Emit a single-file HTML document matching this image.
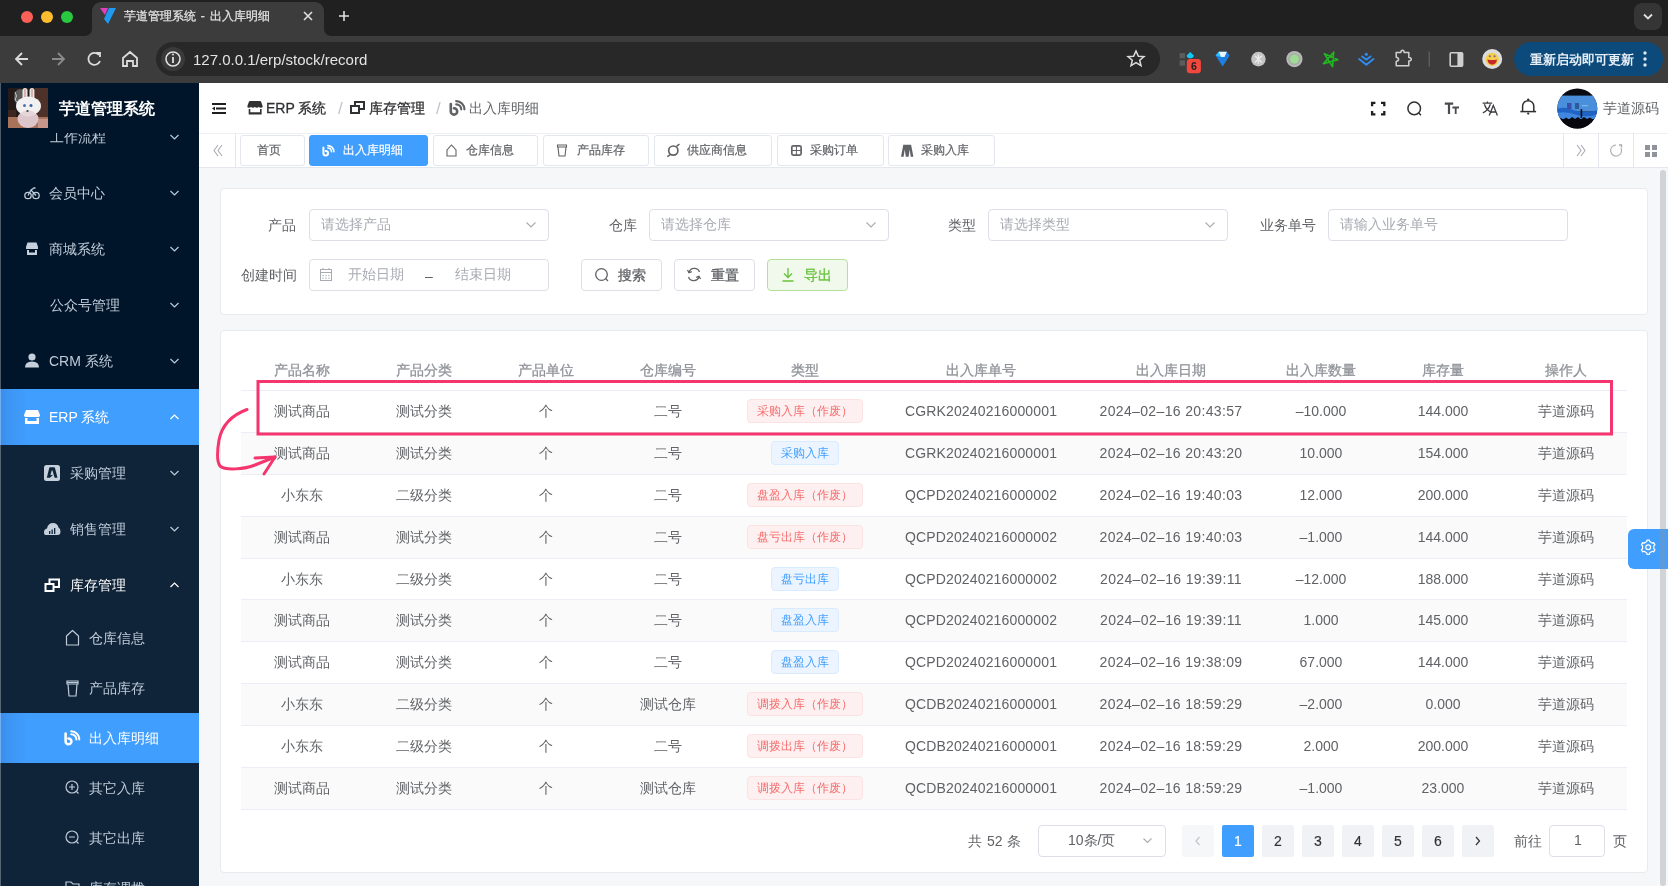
<!DOCTYPE html>
<html><head><meta charset="utf-8">
<style>
*{box-sizing:border-box;margin:0;padding:0}
html,body{width:1668px;height:886px;overflow:hidden;will-change:transform;background:#f5f7f9;font-family:"Liberation Sans",sans-serif;position:relative}
.t{position:absolute;white-space:nowrap;line-height:1}
svg{position:absolute;overflow:visible}
#chrome{position:absolute;left:0;top:0;width:1668px;height:36px;background:#202020}
#toolbar{position:absolute;left:0;top:36px;width:1668px;height:47px;background:#3c3c3c}
#tab{position:absolute;left:92px;top:2px;width:232px;height:40px;background:#3c3c3c;border-radius:9px 9px 0 0}
#url{position:absolute;left:156px;top:42px;width:1004px;height:34px;background:#282828;border-radius:17px}
#side{position:absolute;left:0;top:83px;width:199px;height:803px;background:#001529;overflow:hidden}
.mi{position:absolute;left:0;width:199px;color:#bfcbd9;font-size:14px}
.mi .tx{position:absolute;top:50%;transform:translateY(-50%);line-height:1;white-space:nowrap}
.sub{position:absolute;left:0;width:199px;background:#0f2438}
#header{position:absolute;left:199px;top:83px;width:1469px;height:51px;background:#fff;border-bottom:1px solid #eef0f3}
#tags{position:absolute;left:199px;top:134px;width:1469px;height:34px;background:#fff;border-bottom:1px solid #e4e7ed}
.tg{position:absolute;top:2px;height:31px;border:1px solid #e4e7ed;border-radius:3px;background:#fff;color:#606266;font-size:12px}
.tg .tx{position:absolute;top:8px;line-height:1;white-space:nowrap;-webkit-text-stroke:0.2px currentColor}
.card{position:absolute;background:#fff;border:1px solid #e8eaee;border-radius:4px}
.lbl{position:absolute;font-size:14px;color:#606266;line-height:1;white-space:nowrap;text-align:right}
.inp{position:absolute;height:32px;border:1px solid #dcdfe6;border-radius:4px;background:#fff}
.ph{position:absolute;top:7.3px;font-size:14px;line-height:1;color:#a8abb2;white-space:nowrap}
.btn{position:absolute;top:259px;width:81px;height:32px;border:1px solid #dcdfe6;border-radius:4px;background:#fff;color:#606266;font-size:14px;-webkit-text-stroke:0.3px currentColor}
.btn .tx{position:absolute;left:36px;top:8px;line-height:1}
#tbl{position:absolute;left:241px;top:0;width:1386px}
.thead,.tr{position:absolute;left:241px;width:1386px;height:42px;border-bottom:1px solid #ebeef5}
.tr{background:#fff}
.tr.stripe{background:#fafafa}
.th,.td{position:absolute;top:0;height:41px;text-align:center;line-height:41px;font-size:14px;white-space:nowrap}
.th{color:#909399;-webkit-text-stroke:0.3px #909399;top:1px}
.td{color:#606266}
.tag{display:inline-block;height:24px;line-height:22px;padding:0 9px;font-size:12px;border-radius:4px;border:1px solid;vertical-align:middle;position:relative;top:-1px}
.tag.r{background:#fef0f0;border-color:#fde2e2;color:#f56c6c}
.tag.b{background:#ecf5ff;border-color:#d9ecff;color:#409eff}
.pg{position:absolute;top:825px;width:32px;height:32px;background:#f0f2f5;border-radius:2px;color:#303133;font-size:14px;text-align:center;line-height:32px;-webkit-text-stroke:0.15px currentColor}
</style></head>
<body>
<!-- ===== browser chrome ===== -->
<div id="chrome"></div>
<div id="toolbar"></div>
<div id="tab"></div>
<svg style="left:0;top:0" width="400" height="40">
  <circle cx="27" cy="17" r="6" fill="#fe5f57"/>
  <circle cx="47" cy="17" r="6" fill="#febc2e"/>
  <circle cx="67" cy="17" r="6" fill="#28c840"/>
  <path d="M84 36 Q92 36 92 28 L92 36 Z" fill="#3c3c3c"/>
  <path d="M332 36 Q324 36 324 28 L324 36 Z" fill="#3c3c3c"/>
  <path d="M100 8 L108 8 L105 15 Z" fill="#e23fbf"/>
  <path d="M109 8 L116 8 L108 24 L104 19 Z" fill="#1e9bf0"/>
  <path d="M304 12 L312 20 M312 12 L304 20" stroke="#e0e0e0" stroke-width="1.6"/>
  <path d="M344 11 L344 21 M339 16 L349 16" stroke="#e0e0e0" stroke-width="1.6"/>
</svg>
<div class="t" style="left:124px;top:10px;font-size:12px;color:#e3e3e3;-webkit-text-stroke:0.25px #e3e3e3;word-spacing:1.5px">芋道管理系统 - 出入库明细</div>
<svg style="left:1634px;top:3px" width="28" height="28">
  <rect x="0" y="0" width="28" height="27" rx="8" fill="#353535"/>
  <path d="M10 11.5 L14 15.5 L18 11.5" stroke="#e0e0e0" stroke-width="1.8" fill="none"/>
</svg>
<div id="url"></div>
<svg style="left:0;top:36px" width="1668" height="47">
  <!-- back fwd reload home -->
  <path d="M16 23 L28 23 M22 17 L16 23 L22 29" stroke="#dcdcdc" stroke-width="1.8" fill="none"/>
  <path d="M64 23 L52 23 M58 17 L64 23 L58 29" stroke="#8a8a8a" stroke-width="1.8" fill="none"/>
  <path d="M99 19 A6 6 0 1 0 100 25" stroke="#dcdcdc" stroke-width="1.8" fill="none"/>
  <path d="M96 17 L100 17 L100 21" stroke="#dcdcdc" stroke-width="1.8" fill="none"/>
  <path d="M123 22 L130 16 L137 22 L137 30 L133 30 L133 25 L127 25 L127 30 L123 30 Z" stroke="#dcdcdc" stroke-width="1.8" fill="none"/>
  <circle cx="173" cy="23" r="12" fill="#3a3a3a"/>
  <circle cx="173" cy="23" r="7" stroke="#e0e0e0" stroke-width="1.6" fill="none"/>
  <path d="M173 21 L173 27" stroke="#e0e0e0" stroke-width="1.8"/>
  <circle cx="173" cy="18.6" r="1" fill="#e0e0e0"/>
  <!-- star -->
  <path d="M1136 15 L1138.4 20.2 L1144 20.6 L1139.7 24.2 L1141 29.6 L1136 26.7 L1131 29.6 L1132.3 24.2 L1128 20.6 L1133.6 20.2 Z" stroke="#dcdcdc" stroke-width="1.5" fill="none"/>
  <!-- ext icons -->
  <rect x="1179.6" y="17.1" width="5.4" height="5.2" fill="#5c5c5c"/><rect x="1179.6" y="24.3" width="5.4" height="5.4" fill="#5c5c5c"/>
  <path d="M1190.2 15.9 L1193.8 19.6 Q1194 21.8 1191.5 22.2 L1189 22.2 Q1186.4 21.8 1186.6 19.6 Z" fill="#14c8f5"/>
  <rect x="1186.8" y="23.1" width="14.1" height="14.1" rx="3" fill="#f2473c"/>
  <text x="1193.9" y="34.4" font-size="10.5" fill="#222" text-anchor="middle" font-family="Liberation Sans" font-weight="bold">6</text>
  <path d="M1215.6 19.4 L1218.5 15.7 L1226.8 15.7 L1229.7 19.4 L1223 30 L1222.3 30 Z" fill="#1f7fe0"/>
  <path d="M1218.5 15.7 L1226.8 15.7 L1224.5 21 L1220.8 21 Z" fill="#e9f6ff"/>
  <path d="M1215.6 19.4 L1218.5 15.7 L1220.8 21 Z" fill="#2cc0ff"/>
  <circle cx="1258.4" cy="23.1" r="7.3" fill="#c4c4c4"/>
  <path d="M1255 19.7 L1261.8 26.5 M1261.8 19.7 L1255 26.5 M1258.4 18.5 L1258.4 27.7" stroke="#eaeaea" stroke-width="1.4"/>
  <circle cx="1294.4" cy="23.1" r="8.1" fill="#b9b9b9"/><circle cx="1294.4" cy="23.1" r="6.2" fill="#a9a9a9"/><circle cx="1294.4" cy="23.1" r="4.6" fill="#9edb93"/>
  <path d="M1333.7 16.2 L1332.5 30.6 L1324.4 17.7 L1337.9 23.7 L1323.5 27.6 Z" stroke="#22b522" stroke-width="1.7" fill="none" stroke-linejoin="round"/>
  <circle cx="1366.3" cy="18.3" r="1.6" fill="#2f8cf0"/>
  <path d="M1362.1 20.4 L1366.3 23.5 L1370.5 20.4 M1359.1 23.1 L1366.3 28.8 L1373.5 23.1" stroke="#2f8cf0" stroke-width="1.9" fill="none" stroke-linecap="round"/>
  <path d="M1396.2 16.5 L1400.8 16.5 Q1401 14.3 1402.5 14.3 Q1404 14.3 1404.2 16.5 L1408.8 16.5 L1408.8 21.6 Q1411.3 21.8 1411.3 23.3 Q1411.3 24.8 1408.8 25 L1408.8 29.8 L1396.2 29.8 L1396.2 25.4 Q1398.6 25 1398.6 23.3 Q1398.6 21.6 1396.2 21.2 Z" stroke="#d0d0d0" stroke-width="1.5" fill="none" stroke-linejoin="round"/>
  <path d="M1429.2 15.4 L1429.2 30.8" stroke="#636363" stroke-width="1.2"/>
  <rect x="1450.2" y="16.8" width="12.4" height="13.4" rx="1" stroke="#cfcfcf" stroke-width="1.6" fill="none"/>
  <rect x="1457.4" y="16.8" width="5.2" height="13.4" fill="#cfcfcf"/>
  <circle cx="1492.2" cy="23" r="10" fill="#dcdcdc"/>
  <circle cx="1492.2" cy="23.3" r="6.6" fill="#f3cf4a"/>
  <path d="M1487.4 23.6 Q1492.2 24.6 1497 23.6 Q1496.4 28.6 1492.2 28.8 Q1488 28.6 1487.4 23.6 Z" fill="#c8282a"/>
  <circle cx="1489.8" cy="20.3" r="1" fill="#7a5aa0"/><circle cx="1494.6" cy="20.3" r="1" fill="#7a5aa0"/>
  <rect x="1514" y="6" width="149" height="34" rx="17" fill="#0b4a7b"/>
  <circle cx="1645" cy="17" r="1.7" fill="#dfe9f5"/><circle cx="1645" cy="23" r="1.7" fill="#dfe9f5"/><circle cx="1645" cy="29" r="1.7" fill="#dfe9f5"/>
</svg>
<div class="t" style="left:193px;top:52px;font-size:15px;color:#e3e3e3">127.0.0.1/erp/stock/record</div>
<div class="t" style="left:1530px;top:53px;font-size:13px;color:#e6eef8;font-weight:bold">重新启动即可更新</div>

<!-- ===== sidebar ===== -->
<div id="side">
  <div class="sub" style="top:306px;height:497px"></div>
  <div class="mi" style="top:306px;height:56px;background:linear-gradient(90deg,#3a8ce8 0,#3d95f2 8px,#409eff 28px);color:#fff"></div>
  <div class="mi" style="top:630px;height:50px;background:linear-gradient(90deg,#3a8ce8 0,#3d95f2 8px,#409eff 28px);color:#fff"></div>
  <div style="position:absolute;left:0;top:0;width:1px;height:803px;background:rgba(255,255,255,0.3)"></div>
</div>
<div id="menu-texts">
  <svg style="left:8px;top:88px;overflow:hidden" width="40" height="40">
  <rect width="40" height="40" fill="#241a18"/>
  <rect x="27" y="0" width="13" height="29" fill="#4e3128"/>
  <rect x="0" y="22" width="8" height="8" fill="#3b2620"/>
  <rect x="0" y="29" width="40" height="11" fill="#a8735a"/>
  <rect x="30" y="31" width="10" height="9" fill="#c7968a"/>
  <ellipse cx="12" cy="9" rx="6" ry="8" fill="#5a5a5a"/>
  <path d="M7 4 Q10 8 7 12 Q11 14 9 19" stroke="#c8c8c8" stroke-width="1" fill="none"/>
  <rect x="14.5" y="0" width="5" height="13" rx="2.5" fill="#ece6e6"/>
  <rect x="21.5" y="0" width="5" height="13" rx="2.5" fill="#ece6e6"/>
  <path d="M17 1 L17 11 M24 1 L24 11" stroke="#d9a59c" stroke-width="1.6"/>
  <ellipse cx="20" cy="31" rx="10.5" ry="9" fill="#dcc6cc"/>
  <ellipse cx="20.5" cy="18" rx="12.5" ry="9.5" fill="#f2f0f0"/>
  <ellipse cx="20" cy="25.5" rx="7" ry="3" fill="#e6d6da"/>
  <circle cx="16.5" cy="17.5" r="1.5" fill="#4a76b0"/>
  <circle cx="23" cy="17.5" r="1.5" fill="#35609a"/>
  <ellipse cx="19.5" cy="23" rx="1.2" ry="1" fill="#444"/>
</svg>
  <div class="t" style="left:59px;top:101px;font-size:16px;color:#fff;font-weight:bold">芋道管理系统</div>
  <div style="position:absolute;left:0;top:133px;width:199px;height:753px;overflow:hidden">
    <div class="t" style="left:50px;top:-3px;font-size:14px;color:#bfcbd9">工作流程</div>
    <div class="t" style="left:49px;top:53px;font-size:14px;color:#bfcbd9">会员中心</div>
    <div class="t" style="left:49px;top:109px;font-size:14px;color:#bfcbd9">商城系统</div>
    <div class="t" style="left:50px;top:165px;font-size:14px;color:#bfcbd9">公众号管理</div>
    <div class="t" style="left:49px;top:221px;font-size:14px;color:#bfcbd9">CRM 系统</div>
    <div class="t" style="left:49px;top:277px;font-size:14px;color:#fff">ERP 系统</div>
    <div class="t" style="left:70px;top:333px;font-size:14px;color:#bfcbd9">采购管理</div>
    <div class="t" style="left:70px;top:389px;font-size:14px;color:#bfcbd9">销售管理</div>
    <div class="t" style="left:70px;top:445px;font-size:14px;color:#fff">库存管理</div>
    <div class="t" style="left:89px;top:498px;font-size:14px;color:#bfcbd9">仓库信息</div>
    <div class="t" style="left:89px;top:548px;font-size:14px;color:#bfcbd9">产品库存</div>
    <div class="t" style="left:89px;top:598px;font-size:14px;color:#fff">出入库明细</div>
    <div class="t" style="left:89px;top:648px;font-size:14px;color:#bfcbd9">其它入库</div>
    <div class="t" style="left:89px;top:698px;font-size:14px;color:#bfcbd9">其它出库</div>
    <div class="t" style="left:89px;top:748px;font-size:14px;color:#bfcbd9">库存调拨</div>
  </div>
  <svg style="left:0;top:0" width="199" height="886">
    <g stroke="#bfcbd9" stroke-width="1.2" fill="none">
      <path d="M170.5 135 L174.5 139 L178.5 135"/>
      <path d="M170.5 191 L174.5 195 L178.5 191"/>
      <path d="M170.5 247 L174.5 251 L178.5 247"/>
      <path d="M170.5 303 L174.5 307 L178.5 303"/>
      <path d="M170.5 359 L174.5 363 L178.5 359"/>
      <path d="M170.5 471 L174.5 475 L178.5 471"/>
      <path d="M170.5 527 L174.5 531 L178.5 527"/>
    </g>
    <g stroke="#fff" stroke-width="1.2" fill="none">
      <path d="M170.5 419 L174.5 415 L178.5 419"/>
      <path d="M170.5 587 L174.5 583 L178.5 587"/>
    </g>
    <!-- bicycle -->
    <g stroke="#bfcbd9" stroke-width="1.3" fill="none">
      <circle cx="28" cy="195.5" r="3.2"/><circle cx="36" cy="195.5" r="3.2"/>
      <path d="M28 195.5 L31 190 L36 195.5 M31 190 L34 188 L35.5 188"/>
    </g>
    <!-- shop -->
    <g fill="#c5d0dc"><path d="M26 247 L27.5 242.5 L36.5 242.5 L38 247 L38 249 L26 249 Z"/><path d="M27 250 L29 250 L29 252.5 L35 252.5 L35 250 L37 250 L37 255 L27 255 Z"/></g>
    <!-- user -->
    <g fill="#c5d0dc"><circle cx="32" cy="357" r="3.6"/><path d="M25 367.5 Q25 361.5 32 361.5 Q39 361.5 39 367.5 Z"/></g>
    <!-- erp shop (white) -->
    <g fill="#fff"><path d="M24 415 L26 410 L38 410 L40 415 Q40 417 38.5 417 L25.5 417 Q24 417 24 415 Z"/><path d="M25 418 L27.5 418 L27.5 421 L36.5 421 L36.5 418 L39 418 L39 424 L25 424 Z"/></g>
    <!-- A icon -->
    <rect x="44" y="465" width="16" height="16" rx="2.5" fill="#c5d0dc"/>
    <path d="M46.8 477.8 L49.3 467.8 Q49.5 467.3 50 467.3 L54.2 467.3 Q54.7 467.3 54.9 467.8 L57.5 477.8 L54.6 477.8 L52.5 470.6 L51.7 470.6 L50.4 475.2 L53.2 474.8 L50 477.8 Z" fill="#0f2438"/>
    <!-- cloud -->
    <path d="M45.5 535 Q44 535 44 532 Q44 529 47 528.5 Q48 523 53 523 Q57.5 523 58.5 527.5 Q60.5 528.5 60.5 531.5 Q60.5 535 57.5 535 Z" fill="#c5d0dc"/>
    <g fill="#0f2438"><rect x="49" y="531" width="1.3" height="3"/><rect x="51.5" y="529.5" width="1.3" height="4.5"/><rect x="54" y="528" width="1.3" height="6"/></g>
    <!-- stock (white) -->
    <g stroke="#fff" stroke-width="2" fill="none"><rect x="45.5" y="584" width="8" height="7"/><path d="M49.5 584 L49.5 579.5 L59 579.5 L59 587 L53.5 587"/></g>
    <!-- house -->
    <path d="M66.5 645 L66.5 636 L72.5 630.5 L78.5 636 L78.5 645 Z" stroke="#bfcbd9" stroke-width="1.2" fill="none" stroke-linejoin="round"/>
    <!-- cup -->
    <g stroke="#bfcbd9" stroke-width="1.2" fill="none"><path d="M67 681 L78 681 L78 684 L67 684 Z M68 684 L69 696 L76 696 L77 684 M67.5 682.5 L77.5 682.5"/></g>
    <!-- record white -->
    <g stroke="#fff" fill="none" stroke-linecap="round"><path d="M65.6 733.6 L65.6 741.4 A2.9 2.9 0 1 0 68.5 738.5" stroke-width="2.6"/><path d="M71.2 734.2 A5.2 5.2 0 0 1 76.4 739.4" stroke-width="2"/><path d="M71.2 731.3 A8.1 8.1 0 0 1 79.3 739.4" stroke-width="2"/></g>
    <!-- zoom in / out -->
    <g stroke="#bfcbd9" stroke-width="1.2" fill="none">
      <circle cx="72" cy="787" r="6"/><path d="M76.5 791.5 L78.5 793.5 M69 787 L75 787 M72 784 L72 790"/>
      <circle cx="72" cy="837" r="6"/><path d="M76.5 841.5 L78.5 843.5 M69 837 L75 837"/>
      <path d="M66 888 L66 882 L71 882 L73 884 L79 884 L79 888"/>
    </g>
  </svg>
</div>

<!-- ===== header ===== -->
<div id="header"></div>
<svg style="left:199px;top:83px" width="1469" height="50">
  <!-- hamburger -->
  <g fill="#1f1f1f"><rect x="13" y="20" width="14" height="2"/><rect x="17" y="24.5" width="10" height="2"/><rect x="13" y="29" width="14" height="2"/><path d="M13 25.5 L16 23.5 L16 27.5 Z"/></g>
  <!-- erp shop icon -->
  <g fill="#303133"><path d="M48.3 23.2 L50 18.6 Q50.3 18 51 18 L61 18 Q61.7 18 62 18.6 L63.7 23.2 Q63.7 24.8 62 24.8 Q60.3 24.8 59.8 23.8 Q59.3 24.8 57.8 24.8 Q56.3 24.8 55.9 23.8 Q55.5 24.8 54 24.8 Q52.5 24.8 52.1 23.8 Q51.6 24.8 50 24.8 Q48.3 24.8 48.3 23.2 Z"/><path d="M49.7 26 L51.3 26 L51.3 29.3 L61 29.3 L61 26 L62.6 26 L62.6 31.5 L49.7 31.5 Z"/></g>
  <!-- stock icon -->
  <g stroke="#303133" stroke-width="2" fill="none"><rect x="152" y="23" width="8" height="7"/><path d="M156 23 L156 19 L165 19 L165 26 L160 26"/></g>
  <!-- record icon -->
  <g stroke="#606266" fill="none" stroke-linecap="round"><path d="M251.8 21 L251.8 28.4 A3.2 3.2 0 1 0 255 25.2" stroke-width="2.6"/><path d="M257.2 21.3 A5 5 0 0 1 262.2 26.3" stroke-width="2.2"/><path d="M257.2 18.1 A8.2 8.2 0 0 1 265.4 26.3" stroke-width="2.2"/></g>
  <text x="139" y="31" font-size="17" fill="#c0c4cc" font-family="Liberation Sans">/</text>
  <text x="237" y="31" font-size="17" fill="#c0c4cc" font-family="Liberation Sans">/</text>
  <!-- right icons -->
  <g stroke="#1f1f1f" stroke-width="2.3" fill="none">
    <path d="M1173.1 23.2 L1173.1 19.9 L1176.4 19.9 M1182 19.9 L1185.3 19.9 L1185.3 23.2 M1185.3 28 L1185.3 31.3 L1182 31.3 M1176.4 31.3 L1173.1 31.3 L1173.1 28"/>
  </g>
  <g stroke="#303133" stroke-width="1.5" fill="none">
    <circle cx="1215.2" cy="25.4" r="6.3"/><path d="M1219.8 30 L1222 32.2"/>
  </g>
  <g fill="#4a4b4f">
    <path d="M1245.8 19.6 L1254.2 19.6 L1254.2 21.7 L1251.1 21.7 L1251.1 31 L1248.9 31 L1248.9 21.7 L1245.8 21.7 Z"/>
    <path d="M1253.4 23.6 L1260 23.6 L1260 25.4 L1257.6 25.4 L1257.6 31 L1255.8 31 L1255.8 25.4 L1253.4 25.4 Z"/>
  </g>
  <g stroke="#3c3d41" stroke-width="1.3" fill="none">
    <path d="M1283.6 20.2 L1293.2 20.2 M1288.4 18.6 L1288.4 20.2 M1285.4 21.2 Q1287.5 27.5 1292.8 29.5 M1291.4 21.2 Q1289.2 27.5 1283.8 29.8"/>
    <path d="M1290.2 32.5 L1294.3 22.5 L1298.4 32.5 M1291.7 29 L1296.9 29"/>
  </g>
  <g stroke="#303133" stroke-width="1.5" fill="none">
    <path d="M1323.6 28.3 L1323.6 23.3 A5.6 5.6 0 0 1 1334.8 23.3 L1334.8 28.3"/><path d="M1321.3 28.6 L1337.1 28.6"/>
  </g>
  <circle cx="1329.2" cy="16.6" r="1.2" fill="#303133"/>
  <circle cx="1329.2" cy="30.6" r="1.1" fill="#303133"/>
  <!-- avatar -->
  <clipPath id="av"><circle cx="1378.3" cy="25.4" r="20"/></clipPath>
  <g clip-path="url(#av)">
    <rect x="1358" y="5" width="41" height="41" fill="#0a0a12"/>
    <rect x="1358" y="12.6" width="41" height="16" fill="#4a8fdc"/>
    <path d="M1358 26 Q1366 23 1374 27 Q1386 31 1399 27 L1399 36 L1358 36 Z" fill="#1f63c4"/>
    <path d="M1358 30 Q1368 28 1378 32 Q1390 35 1399 31 L1399 36 L1358 36 Z" fill="#3f86e0"/>
    <rect x="1368" y="20" width="4.5" height="6" fill="#3a4fa8"/>
    <rect x="1376" y="20" width="4" height="6" fill="#2d5a9a"/>
    <rect x="1383" y="22" width="6" height="1.3" fill="#7fb2ea"/>
    <rect x="1381.6" y="26" width="1.6" height="9" fill="#111"/>
    <path d="M1358 46 L1358 36 L1362 35 L1364 37 L1367 34.5 L1370 36.5 L1373 34 L1376 36 L1379 34 L1382 36.5 L1385 34 L1388 36 L1391 34.5 L1394 36.5 L1399 35 L1399 46 Z" fill="#07070d"/>
  </g>
</svg>
<div class="t" style="left:266px;top:101px;font-size:14px;color:#303133;-webkit-text-stroke:0.3px #303133">ERP 系统</div>
<div class="t" style="left:369px;top:101px;font-size:14px;color:#303133;-webkit-text-stroke:0.3px #303133">库存管理</div>
<div class="t" style="left:469px;top:101px;font-size:14px;color:#606266">出入库明细</div>
<div class="t" style="left:1603px;top:101px;font-size:14px;color:#606266">芋道源码</div>
<div id="tags"></div>
<div style="position:absolute;left:235px;top:133px;width:1px;height:34px;background:#e4e7ed"></div>
<div style="position:absolute;left:1563px;top:133px;width:1px;height:34px;background:#e4e7ed"></div>
<div style="position:absolute;left:1598px;top:133px;width:1px;height:34px;background:#e4e7ed"></div>
<div style="position:absolute;left:1633px;top:133px;width:1px;height:34px;background:#e4e7ed"></div>
<div style="position:absolute;left:199px;top:133px">
<div class="tg" style="left:41px;width:65px"><div class="tx" style="left:16px">首页</div></div>
<div class="tg" style="left:110px;width:119px;background:#409eff;border-color:#409eff;color:#fff"><div class="tx" style="left:33px">出入库明细</div></div>
<div class="tg" style="left:234px;width:105px"><div class="tx" style="left:32px">仓库信息</div></div>
<div class="tg" style="left:344px;width:106px"><div class="tx" style="left:33px">产品库存</div></div>
<div class="tg" style="left:455px;width:118px"><div class="tx" style="left:32px">供应商信息</div></div>
<div class="tg" style="left:578px;width:107px"><div class="tx" style="left:32px">采购订单</div></div>
<div class="tg" style="left:689px;width:107px"><div class="tx" style="left:32px">采购入库</div></div>
</div>
<svg style="left:0;top:133px" width="1668" height="35">
  <g stroke="#a8abb2" stroke-width="1.1" fill="none">
    <path d="M218 12 L214 17.5 L218 23 M222 12 L218 17.5 L222 23"/>
    <path d="M1577 12 L1581 17.5 L1577 23 M1581 12 L1585 17.5 L1581 23"/>
    <path d="M1621 15 A5.5 5.5 0 1 1 1616 12"/><path d="M1619 12 L1621.5 12 L1621.5 14.5" stroke-width="1.4"/>
  </g>
  <g fill="#909399"><rect x="1645" y="12" width="5" height="5"/><rect x="1652" y="12" width="5" height="5"/><rect x="1645" y="19" width="5" height="5"/><rect x="1652" y="19" width="5" height="5"/></g>
  <!-- active tag icon -->
  <g stroke="#fff" fill="none" stroke-linecap="round"><path d="M323.4 14.6 L323.4 20.3 A2.3 2.3 0 1 0 325.7 18" stroke-width="2"/><path d="M327.8 15 A3.7 3.7 0 0 1 331.5 18.7" stroke-width="1.6"/><path d="M327.8 12.6 A6.1 6.1 0 0 1 333.9 18.7" stroke-width="1.6"/></g>
  <g stroke="#606266" stroke-width="1.1" fill="none">
    <path d="M447 23 L447 17 L451.5 12 L456 17 L456 23 Z"/>
    <path d="M558 14 L566 14 L565 23 L559 23 Z M557.5 12 L566.5 12 L566.5 14 L557.5 14 Z"/>
    
    
  </g>
  <g fill="#606266"><path d="M901 23.7 L903.3 11.8 L911.1 11.8 L913.4 23.7 L910.8 23.7 L909.6 16.5 L908.6 23.7 L905.8 23.7 L904.8 16.5 L903.6 23.7 Z"/></g>
  <g stroke="#606266" fill="none">
    <circle cx="673.3" cy="17.6" r="4.6" stroke-width="1.7"/>
    <path d="M676.5 13.6 Q678 12 679.5 11.2" stroke-width="1.5"/>
    <path d="M670 21.6 Q668.5 23 667.3 23.7" stroke-width="1.5"/>
    <rect x="791.8" y="12.8" width="9.3" height="9.3" rx="1.5" stroke-width="1.7"/>
    <path d="M796.4 12.8 L796.4 22.1 M791.8 17.5 L801.1 17.5" stroke-width="1"/>
  </g>
</svg>

<!-- ===== search card ===== -->
<div class="card" style="left:220px;top:188px;width:1428px;height:127px"></div>
<div class="lbl" style="left:268px;top:218px">产品</div>
<div class="inp" style="left:309px;top:209px;width:240px"><div class="ph" style="left:11px">请选择产品</div></div>
<div class="lbl" style="left:609px;top:218px">仓库</div>
<div class="inp" style="left:649px;top:209px;width:240px"><div class="ph" style="left:11px">请选择仓库</div></div>
<div class="lbl" style="left:948px;top:218px">类型</div>
<div class="inp" style="left:988px;top:209px;width:240px"><div class="ph" style="left:11px">请选择类型</div></div>
<div class="lbl" style="left:1260px;top:218px">业务单号</div>
<div class="inp" style="left:1328px;top:209px;width:240px"><div class="ph" style="left:11px">请输入业务单号</div></div>
<div class="lbl" style="left:241px;top:268px">创建时间</div>
<div class="inp" style="left:309px;top:259px;width:240px">
  <div class="ph" style="left:38px">开始日期</div>
  <div class="ph" style="left:115px;top:8.5px;color:#606266">–</div>
  <div class="ph" style="left:145px">结束日期</div>
</div>
<div class="btn" style="left:581px"><div class="tx">搜索</div></div>
<div class="btn" style="left:674px"><div class="tx">重置</div></div>
<div class="btn" style="left:767px;background:#f0f9eb;border-color:#b3e19d;color:#67c23a"><div class="tx">导出</div></div>
<svg style="left:0;top:0" width="1668" height="330">
  <g stroke="#a8abb2" stroke-width="1.1" fill="none">
    <path d="M526.5 222.5 L531 227 L535.5 222.5"/>
    <path d="M866.5 222.5 L871 227 L875.5 222.5"/>
    <path d="M1205.5 222.5 L1210 227 L1214.5 222.5"/>
  </g>
  <g stroke="#a8abb2" stroke-width="1" fill="none">
    <rect x="320.5" y="269.5" width="11" height="11"/><path d="M320.5 272.5 L331.5 272.5 M323 268 L323 270 M329 268 L329 270"/>
  </g>
  <g fill="#a8abb2"><rect x="322.5" y="275" width="1.2" height="1.2"/><rect x="325.4" y="275" width="1.2" height="1.2"/><rect x="328.3" y="275" width="1.2" height="1.2"/><rect x="322.5" y="277.6" width="1.2" height="1.2"/><rect x="325.4" y="277.6" width="1.2" height="1.2"/><rect x="328.3" y="277.6" width="1.2" height="1.2"/></g>
  <g stroke="#606266" stroke-width="1.3" fill="none">
    <circle cx="601.5" cy="274.5" r="5.8"/><path d="M605.8 278.8 L608 281"/>
    <path d="M699.5 272 A5.5 5.5 0 0 0 689 272.5 M688.5 277 A5.5 5.5 0 0 0 699 276.5"/>
    <path d="M687.5 270 L689 272.7 L691.8 271.6 M700.5 279 L699 276.3 L696.2 277.4"/>
  </g>
  <g stroke="#67c23a" stroke-width="1.3" fill="none">
    <path d="M788 268 L788 277.5 M784 273.5 L788 277.5 L792 273.5 M782.5 281 L793.5 281"/>
  </g>
</svg>

<!-- ===== table card ===== -->
<div class="card" style="left:220px;top:330px;width:1428px;height:543px"></div>
<div class="thead" style="top:349px">
<div class="th" style="left:0px;width:122px">产品名称</div>
<div class="th" style="left:122px;width:122px">产品分类</div>
<div class="th" style="left:244px;width:122px">产品单位</div>
<div class="th" style="left:366px;width:122px">仓库编号</div>
<div class="th" style="left:488px;width:152px">类型</div>
<div class="th" style="left:640px;width:200px">出入库单号</div>
<div class="th" style="left:840px;width:180px">出入库日期</div>
<div class="th" style="left:1020px;width:120px">出入库数量</div>
<div class="th" style="left:1140px;width:124px">库存量</div>
<div class="th" style="left:1264px;width:122px">操作人</div>
</div>
<div class="tr" style="top:391px;height:42px">
<div class="td" style="left:0px;width:122px;">测试商品</div>
<div class="td" style="left:122px;width:122px;">测试分类</div>
<div class="td" style="left:244px;width:122px;">个</div>
<div class="td" style="left:366px;width:122px;">二号</div>
<div class="td" style="left:488px;width:152px;"><span class="tag r">采购入库（作废）</span></div>
<div class="td" style="left:640px;width:200px;letter-spacing:0.15px;">CGRK20240216000001</div>
<div class="td" style="left:840px;width:180px;letter-spacing:0.35px;">2024&#8211;02&#8211;16 20:43:57</div>
<div class="td" style="left:1020px;width:120px;">&#8211;10.000</div>
<div class="td" style="left:1140px;width:124px;">144.000</div>
<div class="td" style="left:1264px;width:122px;">芋道源码</div>
</div>
<div class="tr stripe" style="top:433px;height:42px">
<div class="td" style="left:0px;width:122px;">测试商品</div>
<div class="td" style="left:122px;width:122px;">测试分类</div>
<div class="td" style="left:244px;width:122px;">个</div>
<div class="td" style="left:366px;width:122px;">二号</div>
<div class="td" style="left:488px;width:152px;"><span class="tag b">采购入库</span></div>
<div class="td" style="left:640px;width:200px;letter-spacing:0.15px;">CGRK20240216000001</div>
<div class="td" style="left:840px;width:180px;letter-spacing:0.35px;">2024&#8211;02&#8211;16 20:43:20</div>
<div class="td" style="left:1020px;width:120px;">10.000</div>
<div class="td" style="left:1140px;width:124px;">154.000</div>
<div class="td" style="left:1264px;width:122px;">芋道源码</div>
</div>
<div class="tr" style="top:475px;height:42px">
<div class="td" style="left:0px;width:122px;">小东东</div>
<div class="td" style="left:122px;width:122px;">二级分类</div>
<div class="td" style="left:244px;width:122px;">个</div>
<div class="td" style="left:366px;width:122px;">二号</div>
<div class="td" style="left:488px;width:152px;"><span class="tag r">盘盈入库（作废）</span></div>
<div class="td" style="left:640px;width:200px;letter-spacing:0.15px;">QCPD20240216000002</div>
<div class="td" style="left:840px;width:180px;letter-spacing:0.35px;">2024&#8211;02&#8211;16 19:40:03</div>
<div class="td" style="left:1020px;width:120px;">12.000</div>
<div class="td" style="left:1140px;width:124px;">200.000</div>
<div class="td" style="left:1264px;width:122px;">芋道源码</div>
</div>
<div class="tr stripe" style="top:517px;height:42px">
<div class="td" style="left:0px;width:122px;">测试商品</div>
<div class="td" style="left:122px;width:122px;">测试分类</div>
<div class="td" style="left:244px;width:122px;">个</div>
<div class="td" style="left:366px;width:122px;">二号</div>
<div class="td" style="left:488px;width:152px;"><span class="tag r">盘亏出库（作废）</span></div>
<div class="td" style="left:640px;width:200px;letter-spacing:0.15px;">QCPD20240216000002</div>
<div class="td" style="left:840px;width:180px;letter-spacing:0.35px;">2024&#8211;02&#8211;16 19:40:03</div>
<div class="td" style="left:1020px;width:120px;">&#8211;1.000</div>
<div class="td" style="left:1140px;width:124px;">144.000</div>
<div class="td" style="left:1264px;width:122px;">芋道源码</div>
</div>
<div class="tr" style="top:559px;height:41px">
<div class="td" style="left:0px;width:122px;">小东东</div>
<div class="td" style="left:122px;width:122px;">二级分类</div>
<div class="td" style="left:244px;width:122px;">个</div>
<div class="td" style="left:366px;width:122px;">二号</div>
<div class="td" style="left:488px;width:152px;"><span class="tag b">盘亏出库</span></div>
<div class="td" style="left:640px;width:200px;letter-spacing:0.15px;">QCPD20240216000002</div>
<div class="td" style="left:840px;width:180px;letter-spacing:0.35px;">2024&#8211;02&#8211;16 19:39:11</div>
<div class="td" style="left:1020px;width:120px;">&#8211;12.000</div>
<div class="td" style="left:1140px;width:124px;">188.000</div>
<div class="td" style="left:1264px;width:122px;">芋道源码</div>
</div>
<div class="tr stripe" style="top:600px;height:42px">
<div class="td" style="left:0px;width:122px;">测试商品</div>
<div class="td" style="left:122px;width:122px;">测试分类</div>
<div class="td" style="left:244px;width:122px;">个</div>
<div class="td" style="left:366px;width:122px;">二号</div>
<div class="td" style="left:488px;width:152px;"><span class="tag b">盘盈入库</span></div>
<div class="td" style="left:640px;width:200px;letter-spacing:0.15px;">QCPD20240216000002</div>
<div class="td" style="left:840px;width:180px;letter-spacing:0.35px;">2024&#8211;02&#8211;16 19:39:11</div>
<div class="td" style="left:1020px;width:120px;">1.000</div>
<div class="td" style="left:1140px;width:124px;">145.000</div>
<div class="td" style="left:1264px;width:122px;">芋道源码</div>
</div>
<div class="tr" style="top:642px;height:42px">
<div class="td" style="left:0px;width:122px;">测试商品</div>
<div class="td" style="left:122px;width:122px;">测试分类</div>
<div class="td" style="left:244px;width:122px;">个</div>
<div class="td" style="left:366px;width:122px;">二号</div>
<div class="td" style="left:488px;width:152px;"><span class="tag b">盘盈入库</span></div>
<div class="td" style="left:640px;width:200px;letter-spacing:0.15px;">QCPD20240216000001</div>
<div class="td" style="left:840px;width:180px;letter-spacing:0.35px;">2024&#8211;02&#8211;16 19:38:09</div>
<div class="td" style="left:1020px;width:120px;">67.000</div>
<div class="td" style="left:1140px;width:124px;">144.000</div>
<div class="td" style="left:1264px;width:122px;">芋道源码</div>
</div>
<div class="tr stripe" style="top:684px;height:42px">
<div class="td" style="left:0px;width:122px;">小东东</div>
<div class="td" style="left:122px;width:122px;">二级分类</div>
<div class="td" style="left:244px;width:122px;">个</div>
<div class="td" style="left:366px;width:122px;">测试仓库</div>
<div class="td" style="left:488px;width:152px;"><span class="tag r">调拨入库（作废）</span></div>
<div class="td" style="left:640px;width:200px;letter-spacing:0.15px;">QCDB20240216000001</div>
<div class="td" style="left:840px;width:180px;letter-spacing:0.35px;">2024&#8211;02&#8211;16 18:59:29</div>
<div class="td" style="left:1020px;width:120px;">&#8211;2.000</div>
<div class="td" style="left:1140px;width:124px;">0.000</div>
<div class="td" style="left:1264px;width:122px;">芋道源码</div>
</div>
<div class="tr" style="top:726px;height:42px">
<div class="td" style="left:0px;width:122px;">小东东</div>
<div class="td" style="left:122px;width:122px;">二级分类</div>
<div class="td" style="left:244px;width:122px;">个</div>
<div class="td" style="left:366px;width:122px;">二号</div>
<div class="td" style="left:488px;width:152px;"><span class="tag r">调拨出库（作废）</span></div>
<div class="td" style="left:640px;width:200px;letter-spacing:0.15px;">QCDB20240216000001</div>
<div class="td" style="left:840px;width:180px;letter-spacing:0.35px;">2024&#8211;02&#8211;16 18:59:29</div>
<div class="td" style="left:1020px;width:120px;">2.000</div>
<div class="td" style="left:1140px;width:124px;">200.000</div>
<div class="td" style="left:1264px;width:122px;">芋道源码</div>
</div>
<div class="tr stripe" style="top:768px;height:42px">
<div class="td" style="left:0px;width:122px;">测试商品</div>
<div class="td" style="left:122px;width:122px;">测试分类</div>
<div class="td" style="left:244px;width:122px;">个</div>
<div class="td" style="left:366px;width:122px;">测试仓库</div>
<div class="td" style="left:488px;width:152px;"><span class="tag r">调拨入库（作废）</span></div>
<div class="td" style="left:640px;width:200px;letter-spacing:0.15px;">QCDB20240216000001</div>
<div class="td" style="left:840px;width:180px;letter-spacing:0.35px;">2024&#8211;02&#8211;16 18:59:29</div>
<div class="td" style="left:1020px;width:120px;">&#8211;1.000</div>
<div class="td" style="left:1140px;width:124px;">23.000</div>
<div class="td" style="left:1264px;width:122px;">芋道源码</div>
</div>

<!-- pagination -->
<div class="t" style="left:968px;top:834px;font-size:14px;color:#606266;word-spacing:1px">共 52 条</div>
<div class="inp" style="left:1038px;top:825px;width:128px"><div class="ph" style="left:29px;color:#606266">10条/页</div></div>
<div class="pg" style="left:1182px;color:#c0c4cc;background:#f6f7f9"></div>
<div class="pg" style="left:1222px;background:#409eff;color:#fff">1</div>
<div class="pg" style="left:1262px">2</div>
<div class="pg" style="left:1302px">3</div>
<div class="pg" style="left:1342px">4</div>
<div class="pg" style="left:1382px">5</div>
<div class="pg" style="left:1422px">6</div>
<div class="pg" style="left:1462px"></div>
<svg style="left:0;top:800px" width="1668" height="86">
  <g stroke="#a8abb2" stroke-width="1.1" fill="none"><path d="M1143.5 38.5 L1147.5 42.5 L1151.5 38.5"/></g>
  <g stroke="#c0c4cc" stroke-width="1.2" fill="none"><path d="M1199.5 37 L1196 41 L1199.5 45"/></g>
  <g stroke="#303133" stroke-width="1.2" fill="none"><path d="M1476 37 L1479.5 41 L1476 45"/></g>
</svg>
<div class="t" style="left:1514px;top:834px;font-size:14px;color:#606266">前往</div>
<div class="inp" style="left:1549px;top:825px;width:56px"><div class="ph" style="left:24px;color:#606266">1</div></div>
<div class="t" style="left:1613px;top:834px;font-size:14px;color:#606266">页</div>


<!-- settings + scrollbar -->
<div style="position:absolute;left:1628px;top:529px;width:50px;height:40px;background:#409eff;border-radius:6px"></div>
<svg style="left:1628px;top:529px" width="40" height="40">
  <path d="M17.40 13.35 L18.77 12.48 L18.95 11.11 L21.45 11.11 L21.63 12.48 L23.00 13.35 L24.44 14.10 L25.72 13.57 L26.97 15.74 L25.87 16.57 L25.80 18.20 L25.87 19.83 L26.97 20.66 L25.72 22.83 L24.44 22.30 L23.00 23.05 L21.63 23.92 L21.45 25.29 L18.95 25.29 L18.77 23.92 L17.40 23.05 L15.96 22.30 L14.68 22.83 L13.43 20.66 L14.53 19.83 L14.60 18.20 L14.53 16.57 L13.43 15.74 L14.68 13.57 L15.96 14.10 Z" stroke="#fff" stroke-width="1.2" fill="none" stroke-linejoin="round"/>
  <circle cx="20.2" cy="18.2" r="2.4" stroke="#fff" stroke-width="1.2" fill="none"/>
</svg>
<div style="position:absolute;left:1660px;top:170px;width:6px;height:716px;background:rgba(144,147,153,0.35);border-radius:3px"></div>
<!-- annotation -->
<svg style="left:0;top:0" width="1668" height="886">
  <rect x="258" y="381.5" width="1353.5" height="52.5" stroke="#f5356e" stroke-width="3" fill="none"/>
  <path d="M247 409.5 C232 415 222 425 219 440 C217 452 217 462 220 466 C226 471 245 469 255 465 L275 457" stroke="#f5356e" stroke-width="3" fill="none" stroke-linecap="round"/>
  <path d="M255 458 L275 457 L264 474" stroke="#f5356e" stroke-width="3" fill="none" stroke-linecap="round" stroke-linejoin="round"/>
</svg>
</body></html>
